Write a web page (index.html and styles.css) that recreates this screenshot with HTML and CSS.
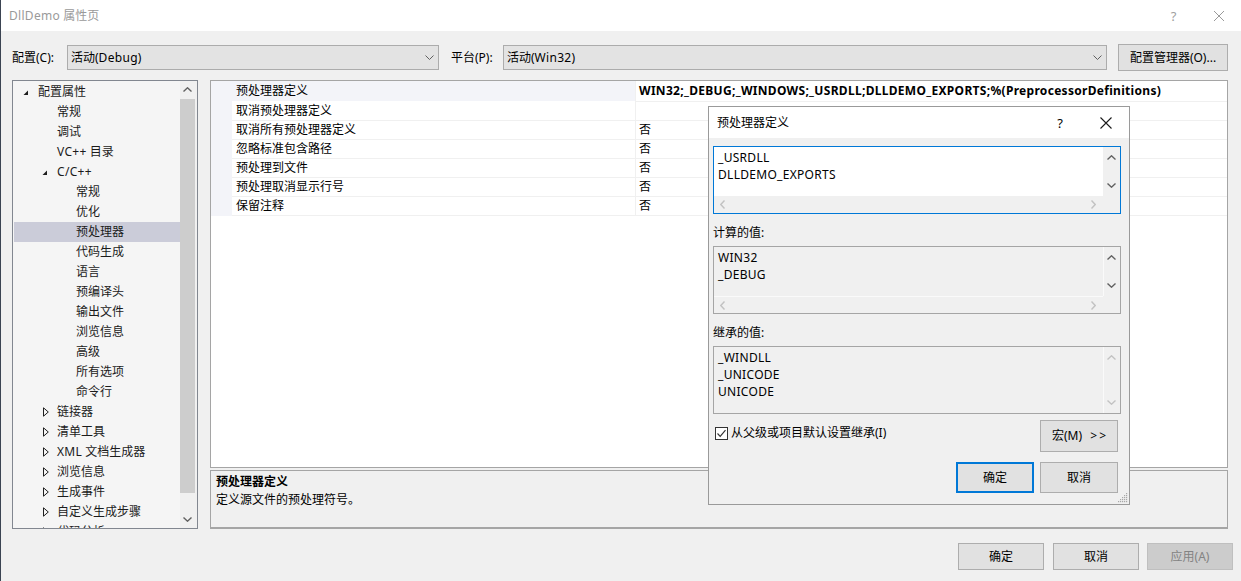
FILE: index.html
```html
<!DOCTYPE html>
<html lang="zh-CN">
<head>
<meta charset="utf-8">
<title>DllDemo 属性页</title>
<link rel="stylesheet" href="styles.css">
</head>
<body>
<div class="window">
  <div class="titlebar">
    <span class="title"><span class="latin">DllDemo</span> 属性页</span>
    <span class="tb-btn tb-help">?</span>
    <span class="tb-btn"><svg width="12" height="12" viewBox="0 0 12 12"><path d="M1 1L11 11M11 1L1 11" stroke="#9a9a9a" stroke-width="1" fill="none"/></svg></span>
  </div>

  <div class="toolbar">
    <span class="lbl lbl1">配置(C):</span>
    <div class="combo combo1"><span>活动(<span class="latin">Debug</span>)</span><svg class="chev" width="9" height="5" viewBox="0 0 9 5"><path d="M0.5 0.5L4.5 4.5L8.5 0.5" stroke="#606060" stroke-width="1" fill="none"/></svg></div>
    <span class="lbl lbl2">平台(P):</span>
    <div class="combo combo2"><span>活动(<span class="latin">Win32</span>)</span><svg class="chev" width="9" height="5" viewBox="0 0 9 5"><path d="M0.5 0.5L4.5 4.5L8.5 0.5" stroke="#606060" stroke-width="1" fill="none"/></svg></div>
    <button class="btn cfg-btn">配置管理器(O)...</button>
  </div>

  <div class="main">
    <div class="tree">
      <ul class="tree-list">
        <li class="tree-row l0"><span class="tog"><svg width="6" height="6" viewBox="0 0 6 6"><path d="M5 0.5V5H0.5Z" fill="#1e1e1e"/></svg></span>配置属性</li>
        <li class="tree-row l1"><span class="tog"></span>常规</li>
        <li class="tree-row l1"><span class="tog"></span>调试</li>
        <li class="tree-row l1"><span class="tog"></span><span class="latin">VC++</span>&nbsp;目录</li>
        <li class="tree-row l1"><span class="tog"><svg width="6" height="6" viewBox="0 0 6 6"><path d="M5 0.5V5H0.5Z" fill="#1e1e1e"/></svg></span><span class="latin">C/C++</span></li>
        <li class="tree-row l2"><span class="tog"></span>常规</li>
        <li class="tree-row l2"><span class="tog"></span>优化</li>
        <li class="tree-row l2 selected"><span class="tog"></span>预处理器</li>
        <li class="tree-row l2"><span class="tog"></span>代码生成</li>
        <li class="tree-row l2"><span class="tog"></span>语言</li>
        <li class="tree-row l2"><span class="tog"></span>预编译头</li>
        <li class="tree-row l2"><span class="tog"></span>输出文件</li>
        <li class="tree-row l2"><span class="tog"></span>浏览信息</li>
        <li class="tree-row l2"><span class="tog"></span>高级</li>
        <li class="tree-row l2"><span class="tog"></span>所有选项</li>
        <li class="tree-row l2"><span class="tog"></span>命令行</li>
        <li class="tree-row l1"><span class="tog tog-c"><svg width="6" height="10" viewBox="0 0 6 10"><path d="M0.5 0.8V9.2L5.3 5Z" fill="none" stroke="#1e1e1e" stroke-width="1"/></svg></span>链接器</li>
        <li class="tree-row l1"><span class="tog tog-c"><svg width="6" height="10" viewBox="0 0 6 10"><path d="M0.5 0.8V9.2L5.3 5Z" fill="none" stroke="#1e1e1e" stroke-width="1"/></svg></span>清单工具</li>
        <li class="tree-row l1"><span class="tog tog-c"><svg width="6" height="10" viewBox="0 0 6 10"><path d="M0.5 0.8V9.2L5.3 5Z" fill="none" stroke="#1e1e1e" stroke-width="1"/></svg></span><span class="latin">XML</span>&nbsp;文档生成器</li>
        <li class="tree-row l1"><span class="tog tog-c"><svg width="6" height="10" viewBox="0 0 6 10"><path d="M0.5 0.8V9.2L5.3 5Z" fill="none" stroke="#1e1e1e" stroke-width="1"/></svg></span>浏览信息</li>
        <li class="tree-row l1"><span class="tog tog-c"><svg width="6" height="10" viewBox="0 0 6 10"><path d="M0.5 0.8V9.2L5.3 5Z" fill="none" stroke="#1e1e1e" stroke-width="1"/></svg></span>生成事件</li>
        <li class="tree-row l1"><span class="tog tog-c"><svg width="6" height="10" viewBox="0 0 6 10"><path d="M0.5 0.8V9.2L5.3 5Z" fill="none" stroke="#1e1e1e" stroke-width="1"/></svg></span>自定义生成步骤</li>
        <li class="tree-row l1"><span class="tog tog-c"><svg width="6" height="10" viewBox="0 0 6 10"><path d="M0.5 0.8V9.2L5.3 5Z" fill="none" stroke="#1e1e1e" stroke-width="1"/></svg></span>代码分析</li>
      </ul>
      <div class="vscroll">
        <div class="vs-btn"><svg width="9" height="5" viewBox="0 0 9 5"><path d="M0.5 4.5L4.5 0.8L8.5 4.5" stroke="#606060" stroke-width="1.4" fill="none"/></svg></div>
        <div class="vs-track"><div class="vs-thumb"></div></div>
        <div class="vs-btn"><svg width="9" height="5" viewBox="0 0 9 5"><path d="M0.5 0.5L4.5 4.2L8.5 0.5" stroke="#606060" stroke-width="1.4" fill="none"/></svg></div>
      </div>
    </div>

    <div class="right">
      <div class="grid">
        <div class="prow current"><div class="gut"></div><div class="pname">预处理器定义</div><div class="pval bold latin">WIN32;_DEBUG;_WINDOWS;_USRDLL;DLLDEMO_EXPORTS;%(PreprocessorDefinitions)</div></div>
        <div class="prow"><div class="gut"></div><div class="pname">取消预处理器定义</div><div class="pval"></div></div>
        <div class="prow"><div class="gut"></div><div class="pname">取消所有预处理器定义</div><div class="pval">否</div></div>
        <div class="prow"><div class="gut"></div><div class="pname">忽略标准包含路径</div><div class="pval">否</div></div>
        <div class="prow"><div class="gut"></div><div class="pname">预处理到文件</div><div class="pval">否</div></div>
        <div class="prow"><div class="gut"></div><div class="pname">预处理取消显示行号</div><div class="pval">否</div></div>
        <div class="prow"><div class="gut"></div><div class="pname">保留注释</div><div class="pval">否</div></div>
      </div>
      <div class="desc">
        <div class="desc-title">预处理器定义</div>
        <div>定义源文件的预处理符号。</div>
      </div>
    </div>
  </div>

  <div class="footer">
    <button class="btn fbtn">确定</button>
    <button class="btn fbtn">取消</button>
    <button class="btn fbtn disabled">应用(A)</button>
  </div>

  <div class="dialog">
    <div class="dlg-title">
      <span class="dlg-caption">预处理器定义</span>
      <span class="dlg-btn dlg-help">?</span>
      <span class="dlg-btn"><svg width="12" height="12" viewBox="0 0 12 12"><path d="M0.5 0.5L11.5 11.5M11.5 0.5L0.5 11.5" stroke="#1a1a1a" stroke-width="1.1" fill="none"/></svg></span>
    </div>
    <div class="dlg-body">
      <div class="ebox focus">
        <div class="ecnt white latin"><div>_USRDLL</div><div>DLLDEMO_EXPORTS</div></div>
        <div class="evs">
          <svg width="9" height="5" viewBox="0 0 9 5"><path d="M0.5 4.5L4.5 0.8L8.5 4.5" stroke="#606060" stroke-width="1.4" fill="none"/></svg>
          <svg width="9" height="5" viewBox="0 0 9 5"><path d="M0.5 0.5L4.5 4.2L8.5 0.5" stroke="#606060" stroke-width="1.4" fill="none"/></svg>
        </div>
        <div class="ehs">
          <svg width="5" height="9" viewBox="0 0 5 9"><path d="M4.5 0.5L0.8 4.5L4.5 8.5" stroke="#c2c2c2" stroke-width="1.4" fill="none"/></svg>
          <svg width="5" height="9" viewBox="0 0 5 9"><path d="M0.5 0.5L4.2 4.5L0.5 8.5" stroke="#c2c2c2" stroke-width="1.4" fill="none"/></svg>
        </div>
        <div class="ecorner"></div>
      </div>

      <div class="dlabel">计算的值:</div>
      <div class="ebox ro">
        <div class="ecnt latin"><div>WIN32</div><div>_DEBUG</div></div>
        <div class="evs sep">
          <svg width="9" height="5" viewBox="0 0 9 5"><path d="M0.5 4.5L4.5 0.8L8.5 4.5" stroke="#606060" stroke-width="1.4" fill="none"/></svg>
          <svg width="9" height="5" viewBox="0 0 9 5"><path d="M0.5 0.5L4.5 4.2L8.5 0.5" stroke="#606060" stroke-width="1.4" fill="none"/></svg>
        </div>
        <div class="ehs sep">
          <svg width="5" height="9" viewBox="0 0 5 9"><path d="M4.5 0.5L0.8 4.5L4.5 8.5" stroke="#c2c2c2" stroke-width="1.4" fill="none"/></svg>
          <svg width="5" height="9" viewBox="0 0 5 9"><path d="M0.5 0.5L4.2 4.5L0.5 8.5" stroke="#c2c2c2" stroke-width="1.4" fill="none"/></svg>
        </div>
        <div class="ecorner"></div>
      </div>

      <div class="dlabel">继承的值:</div>
      <div class="ebox ro nohs">
        <div class="ecnt latin"><div>_WINDLL</div><div>_UNICODE</div><div>UNICODE</div></div>
        <div class="evs sep">
          <svg width="9" height="5" viewBox="0 0 9 5"><path d="M0.5 4.5L4.5 0.8L8.5 4.5" stroke="#c2c2c2" stroke-width="1.4" fill="none"/></svg>
          <svg width="9" height="5" viewBox="0 0 9 5"><path d="M0.5 0.5L4.5 4.2L8.5 0.5" stroke="#c2c2c2" stroke-width="1.4" fill="none"/></svg>
        </div>
      </div>

      <div class="drow">
        <label class="chk"><span class="chkbox"><svg width="11" height="11" viewBox="0 0 11 11"><path d="M1.5 5.5L4.2 8.3L9.5 2.2" stroke="#333" stroke-width="1.2" fill="none"/></svg></span>从父级或项目默认设置继承(I)</label>
        <button class="btn dbtn macro">宏(M)&nbsp;&nbsp;<span class="gt">&gt;</span><span class="gt">&gt;</span></button>
      </div>
      <div class="drow2">
        <button class="btn dbtn default">确定</button>
        <button class="btn dbtn">取消</button>
      </div>
    </div>
    <svg class="grip" width="11" height="11" viewBox="0 0 11 11"><g fill="#a8a8a8"><rect x="9" y="1" width="1.2" height="1.2"/><rect x="7" y="3" width="1.2" height="1.2"/><rect x="9" y="3" width="1.2" height="1.2"/><rect x="5" y="5" width="1.2" height="1.2"/><rect x="7" y="5" width="1.2" height="1.2"/><rect x="9" y="5" width="1.2" height="1.2"/><rect x="3" y="7" width="1.2" height="1.2"/><rect x="5" y="7" width="1.2" height="1.2"/><rect x="7" y="7" width="1.2" height="1.2"/><rect x="9" y="7" width="1.2" height="1.2"/><rect x="1" y="9" width="1.2" height="1.2"/><rect x="3" y="9" width="1.2" height="1.2"/><rect x="5" y="9" width="1.2" height="1.2"/><rect x="7" y="9" width="1.2" height="1.2"/><rect x="9" y="9" width="1.2" height="1.2"/></g></svg>
  </div>
</div>
</body>
</html>
```

FILE: styles.css
```css
* { box-sizing: border-box; margin: 0; padding: 0; }
html, body { width: 1241px; height: 581px; overflow: hidden; }
body {
  font-family: "Noto Sans", "Noto Sans CJK SC", sans-serif;
  font-size: 12px;
  color: #000;
  background: #f0f0f0;
}
.latin { letter-spacing: 0.3px; }
.window {
  position: relative;
  width: 1241px;
  height: 581px;
  background: #f0f0f0;
  border-left: 1px solid #3b4452;
  display: flex;
  flex-direction: column;
}

/* title bar */
.titlebar {
  flex: none;
  height: 31px;
  background: #fff;
  display: flex;
  align-items: center;
  padding-left: 8px;
  color: #9a9a9a;
}
.title { flex: 1; line-height: 16px; }
.tb-btn {
  width: 45px;
  height: 31px;
  display: flex;
  align-items: center;
  justify-content: center;
}
.tb-help { font-size: 13px; color: #a0a0a0; }

/* toolbar */
.toolbar {
  flex: none;
  display: flex;
  align-items: center;
  height: 27px;
  margin-top: 13px;
  padding: 0 13px 0 11px;
}
.lbl { line-height: 16px; white-space: nowrap; }
.lbl1 { width: 55px; }
.lbl2 { width: 52px; margin-left: 12px; }
.combo {
  height: 25px;
  background: #e3e3e3;
  border: 1px solid #acacac;
  display: flex;
  align-items: center;
  justify-content: space-between;
  padding: 0 4px 0 3px;
  line-height: 16px;
}
.combo1 { width: 372px; }
.combo2 { flex: 1; }
.btn {
  font: inherit;
  color: #000;
  background: #e1e1e1;
  border: 1px solid #adadad;
  display: flex;
  align-items: center;
  justify-content: center;
  line-height: 16px;
}
.cfg-btn { width: 110px; height: 27px; margin-left: 11px; }

/* main area */
.main {
  flex: none;
  display: flex;
  gap: 12px;
  height: 449px;
  margin-top: 9px;
  padding: 0 13px 0 11px;
}
.tree {
  width: 186px;
  border: 1px solid #828790;
  background: #f5f5f5;
  display: flex;
  overflow: hidden;
}
.tree-list {
  flex: 1;
  list-style: none;
  padding: 1px 0 0 1px;
  overflow: hidden;
  color: #1b1b1b;
}
.tree-row {
  height: 20px;
  display: flex;
  align-items: center;
  white-space: nowrap;
  line-height: 16px;
}
.tree-row.l0 { padding-left: 5px; }
.tree-row.l1 { padding-left: 24px; }
.tree-row.l2 { padding-left: 43px; }
.tree-row.selected { background: #cbccd9; }
.tog {
  flex: none;
  width: 19px;
  height: 20px;
  display: flex;
  align-items: center;
  padding: 2px 0 0 4px;
}
.tog-c { padding: 0 0 0 5px; }
.vscroll {
  width: 17px;
  flex: none;
  background: #f0f0f0;
  display: flex;
  flex-direction: column;
}
.vs-btn {
  height: 17px;
  display: flex;
  align-items: center;
  justify-content: center;
  padding-right: 2px;
}
.vs-track { flex: 1; padding-top: 1px; }
.vs-thumb { width: 15px; height: 394px; background: #cdcdcd; }

.right {
  width: 1018px;
  display: flex;
  flex-direction: column;
  gap: 2px;
}
.grid {
  height: 388px;
  border: 1px solid #a5a5a5;
  background: #fff;
  overflow: hidden;
}
.prow { display: flex; height: 19px; }
.prow.current { height: 21px; }
.gut { width: 21px; flex: none; background: #f3f4f9; }
.pname, .pval {
  border-bottom: 1px solid #f0f0f0;
  white-space: nowrap;
  overflow: hidden;
  display: flex;
  align-items: center;
  line-height: 16px;
}
.pname { width: 403px; flex: none; padding-left: 4px; }
.pval { flex: 1; border-left: 1px solid #f0f0f0; padding-left: 3px; }
.prow.current .pname { background: #f3f4f9; border-bottom-color: #fff; }
.bold { font-weight: 700; }
.desc {
  flex: 1;
  border: 1px solid #a5a5a5;
  border-bottom: 2px solid #a5a5a5;
  padding: 2px 5px;
  line-height: 18px;
}
.desc-title { font-weight: 700; }

/* footer */
.footer {
  flex: 1;
  display: flex;
  justify-content: flex-end;
  align-items: flex-start;
  gap: 9px;
  padding: 14px 8px 0 0;
}
.fbtn { width: 86px; height: 27px; }
.fbtn.disabled { background: #cccccc; border-color: #bfbfbf; color: #838383; margin-left: -1px; }

/* dialog */
.dialog {
  position: absolute;
  left: 707px;
  top: 106px;
  width: 422px;
  height: 399px;
  border: 1px solid #9a9a9a;
  background: #f0f0f0;
  display: flex;
  flex-direction: column;
}
.dlg-title {
  flex: none;
  height: 31px;
  background: #fff;
  display: flex;
  align-items: center;
  padding-left: 8px;
}
.dlg-caption { flex: 1; line-height: 16px; }
.dlg-btn {
  width: 46px;
  height: 31px;
  display: flex;
  align-items: center;
  justify-content: center;
}
.dlg-help { font-size: 13px; }
.dlg-body {
  flex: 1;
  padding: 8px 8px 0 4px;
  display: flex;
  flex-direction: column;
}
.ebox {
  flex: none;
  height: 68px;
  border: 1px solid #a5a5a5;
  display: grid;
  grid-template-columns: 1fr 17px;
  grid-template-rows: 1fr 17px;
  background: #f0f0f0;
}
.ebox.focus { border-color: #0078d7; }
.ebox.nohs { grid-template-rows: 1fr; }
.ecnt {
  padding: 2px 4px;
  line-height: 17px;
  overflow: hidden;
  white-space: nowrap;
}
.ecnt.white { background: #fff; }
.evs {
  display: flex;
  flex-direction: column;
  align-items: center;
  justify-content: space-between;
  padding: 8px 1px 8px 0;
}
.ehs {
  display: flex;
  align-items: center;
  justify-content: space-between;
  padding: 0 7px 0 6px;
}
.evs.sep { border-left: 1px solid #fafafa; }
.ehs.sep { border-top: 1px solid #fafafa; }
.dlabel {
  flex: none;
  height: 32px;
  padding-top: 10px;
  line-height: 17px;
}
.drow {
  flex: none;
  display: flex;
  align-items: flex-start;
  justify-content: space-between;
  margin-top: 6px;
  height: 32px;
  padding-right: 3px;
}
.chk {
  display: flex;
  align-items: center;
  gap: 3px;
  margin: 5px 0 0 2px;
  line-height: 16px;
}
.chkbox {
  width: 13px;
  height: 13px;
  border: 1px solid #333;
  background: #fff;
  display: flex;
  align-items: center;
  justify-content: center;
}
.dbtn { width: 78px; height: 32px; }
.macro .gt { margin-left: 2px; }
.drow2 {
  flex: none;
  display: flex;
  justify-content: flex-end;
  gap: 6px;
  margin-top: 10px;
  padding-right: 3px;
}
.drow2 .dbtn { height: 31px; }
.dbtn.default { border: 2px solid #0078d7; }
.grip { position: absolute; right: 1px; bottom: 1px; }
```
